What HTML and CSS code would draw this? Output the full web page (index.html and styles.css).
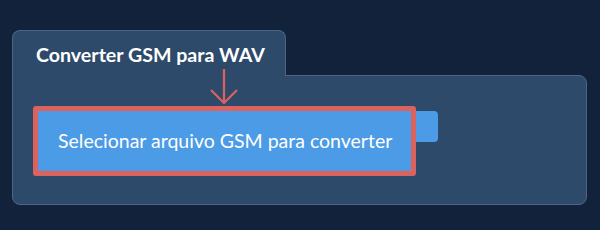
FILE: index.html
```html
<!DOCTYPE html>
<html lang="pt">
<head>
    <meta charset="UTF-8">
    <meta name="viewport" content="width=device-width, initial-scale=1.0">
    <title>Converter GSM para WAV</title>
    <link rel="stylesheet" href="styles.css">
</head>
<body>
    <div class="converter">
        <div class="tab">Converter GSM para WAV</div>
        <div class="panel">
            <div class="pick-row">
                <button class="pick-btn" type="button">Selecionar arquivo GSM para converter</button>
                <span class="pick-tail"></span>
            </div>
        </div>
        <!-- seta de destaque -->
        <svg class="hint-arrow" width="32" height="38" viewBox="0 0 32 38" fill="none">
            <path d="M16 0V34M3 21L16 34L29 21" stroke="#dc625d" stroke-width="2.2"/>
        </svg>
    </div>
</body>
</html>
```

FILE: styles.css
```css
/* base */
body {
    margin: 0;
    padding: 30px 0 0 12px;
    background: #11223a;
    font-family: Lato, "Open Sans", sans-serif;
    height: 230px;
    box-sizing: border-box;
    overflow: hidden;
}

.converter {
    position: relative;
    width: 575px;
}

/* aba do titulo */
.tab {
    width: 274px;
    box-sizing: border-box;
    padding: 13px 0 10px 23px;
    line-height: 22px;
    font-size: 19.6px;
    font-weight: 700;
    color: #fff;
    background: #2e4a6a;
    border: 1px solid #4c6686;
    border-bottom: none;
    border-radius: 8px 8px 0 0;
    position: relative;
    z-index: 1;
    margin-bottom: -1px;
}

.panel {
    background: #2e4a6a;
    border: 1px solid #4c6686;
    border-radius: 0 8px 8px 8px;
    padding: 30px 20px 28px;
}

.pick-row {
    display: flex;
    align-items: flex-start;
}

.pick-btn {
    width: 383px;
    height: 70px;
    box-sizing: border-box;
    border: 5px solid #dc625d;
    border-radius: 3px;
    background: #4b9be6;
    color: #fff;
    font-family: inherit;
    font-size: 19.5px;
    text-align: left;
    padding: 0 0 2px 20px;
    cursor: pointer;
}

.pick-tail {
    width: 22px;
    height: 31px;
    margin-top: 5px;
    background: #4b9be6;
    border-radius: 0 4px 4px 0;
}

.hint-arrow {
    position: absolute;
    left: 196px;
    top: 39px;
    z-index: 2;
}
```
